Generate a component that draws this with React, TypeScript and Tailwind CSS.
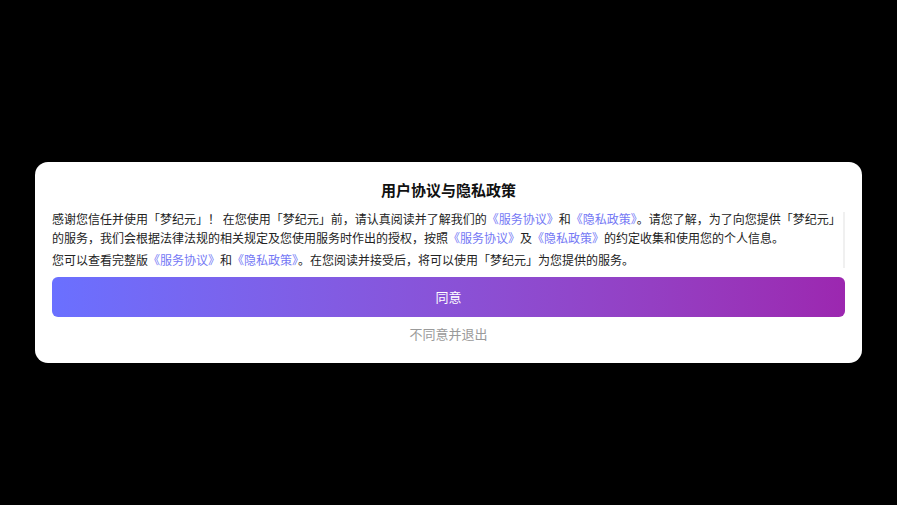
import React from "react";

const Link = ({ children }: { children: React.ReactNode }) => (
  <span className="text-[#7478f5]">{children}</span>
);

export default function App() {
  return (
    <div
      className="w-full min-h-[505px] bg-black flex flex-col items-stretch px-[35px] pt-[162px]"
      style={{ fontFamily: '"Noto Sans CJK SC", "Noto Sans", sans-serif' }}
    >
      <div className="bg-white rounded-[13px] pt-[16px] pb-[19px] px-[17px] flex flex-col">
        <h1 className="text-center text-[15px] font-bold text-[#111] leading-[24px]">
          用户协议与隐私政策
        </h1>
        <div className="mt-[8px] flex gap-[2px]">
          <div className="flex-1 text-[12px] text-[#222] leading-[18.5px]">
            <p>
              感谢您信任并使用「梦纪元」！ 在您使用「梦纪元」前，请认真阅读并了解我们的<Link>《服务协议》</Link>和<Link>《隐私政策》</Link>。请您了解，为了向您提供「梦纪元」的服务，我们会根据法律法规的相关规定及您使用服务时作出的授权，按照<Link>《服务协议》</Link>及<Link>《隐私政策》</Link>的约定收集和使用您的个人信息。
            </p>
            <p className="mt-[4px]">
              您可以查看完整版<Link>《服务协议》</Link>和<Link>《隐私政策》</Link>。在您阅读并接受后，将可以使用「梦纪元」为您提供的服务。
            </p>
          </div>
          <div className="w-[2px] bg-[#f0f0f0] mt-[2px] mb-[2px]" />
        </div>
        <button className="mt-[7px] h-[40px] w-full rounded-[6px] bg-gradient-to-r from-[#6a70ff] to-[#9c27b0] text-white text-[13px]">
          同意
        </button>
        <div className="mt-[7px] text-center text-[13px] text-[#9a9a9a] leading-[20px]">
          不同意并退出
        </div>
      </div>
    </div>
  );
}
